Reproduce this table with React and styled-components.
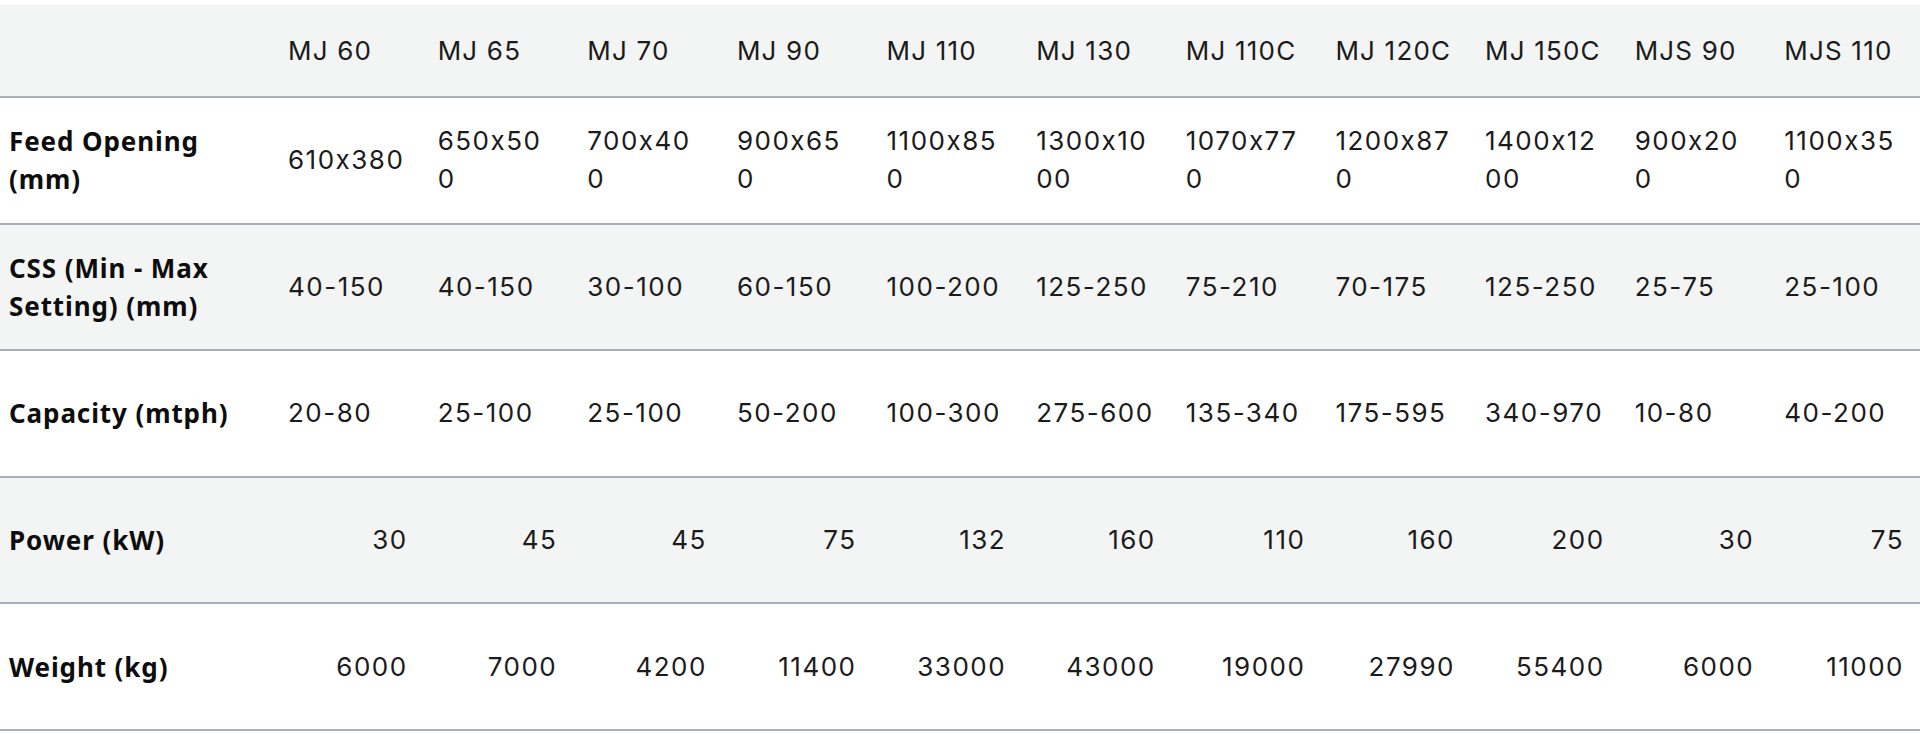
import React from "react";
import styled, { createGlobalStyle } from "styled-components";

const GlobalStyle = createGlobalStyle`
  html, body {
    margin: 0;
    padding: 0;
    background: #ffffff;
  }
  body {
    font-family: "Inter", "Liberation Sans", sans-serif;
    color: #1b1b1b;
  }
`;

const Wrapper = styled.div`
  padding-top: 5px;
  width: 1920px;
`;

const Table = styled.table`
  width: 100%;
  table-layout: fixed;
  border-collapse: separate;
  border-spacing: 0;
`;

const LabelCol = styled.col`
  width: 274px;
`;

const Row = styled.tr`
  background: ${(p) => (p.$shaded ? "#f3f4f4" : "#ffffff")};
`;

const HeadCell = styled.th`
  box-sizing: border-box;
  height: 93px;
  padding: 0 16px 0 14px;
  text-align: left;
  vertical-align: middle;
  font-family: "Inter", "Liberation Sans", sans-serif;
  font-weight: 400;
  font-size: 26px;
  letter-spacing: 1.2px;
  line-height: 38px;
  color: #1b1b1b;
  white-space: nowrap;
  border-bottom: 2px solid #a9aeb9;
`;

const LabelCell = styled.th`
  box-sizing: border-box;
  height: 126.6px;
  padding: 0 30px 0 9px;
  text-align: left;
  vertical-align: middle;
  font-family: "Noto Sans", "Open Sans", sans-serif;
  font-weight: 700;
  font-size: 26px;
  letter-spacing: 0.9px;
  line-height: 38px;
  color: #0d0d0d;
  border-bottom: 2px solid #a9aeb9;
`;

const DataCell = styled.td`
  box-sizing: border-box;
  height: 126.6px;
  padding: 0 ${(p) => (p.$numeric ? "16px" : "18px")} 0 14px;
  text-align: ${(p) => (p.$numeric ? "right" : "left")};
  vertical-align: middle;
  font-family: "Inter", "Liberation Sans", sans-serif;
  font-weight: 400;
  font-size: 26px;
  letter-spacing: 1.5px;
  line-height: 38px;
  color: #1b1b1b;
  white-space: ${(p) => (p.$breakable ? "normal" : "nowrap")};
  overflow-wrap: ${(p) => (p.$breakable ? "anywhere" : "normal")};
  border-bottom: 2px solid #a9aeb9;
`;

const models = [
  "MJ 60",
  "MJ 65",
  "MJ 70",
  "MJ 90",
  "MJ 110",
  "MJ 130",
  "MJ 110C",
  "MJ 120C",
  "MJ 150C",
  "MJS 90",
  "MJS 110",
];

const rows = [
  {
    label: "Feed Opening (mm)",
    breakable: true,
    values: [
      "610x380",
      "650x500",
      "700x400",
      "900x650",
      "1100x850",
      "1300x1000",
      "1070x770",
      "1200x870",
      "1400x1200",
      "900x200",
      "1100x350",
    ],
  },
  {
    label: "CSS (Min - Max Setting) (mm)",
    values: [
      "40-150",
      "40-150",
      "30-100",
      "60-150",
      "100-200",
      "125-250",
      "75-210",
      "70-175",
      "125-250",
      "25-75",
      "25-100",
    ],
  },
  {
    label: "Capacity (mtph)",
    values: [
      "20-80",
      "25-100",
      "25-100",
      "50-200",
      "100-300",
      "275-600",
      "135-340",
      "175-595",
      "340-970",
      "10-80",
      "40-200",
    ],
  },
  {
    label: "Power (kW)",
    numeric: true,
    values: ["30", "45", "45", "75", "132", "160", "110", "160", "200", "30", "75"],
  },
  {
    label: "Weight (kg)",
    numeric: true,
    values: [
      "6000",
      "7000",
      "4200",
      "11400",
      "33000",
      "43000",
      "19000",
      "27990",
      "55400",
      "6000",
      "11000",
    ],
  },
];

export default function App() {
  return (
    <Wrapper>
      <GlobalStyle />
      <Table>
        <colgroup>
          <LabelCol />
          {models.map((m) => (
            <col key={m} />
          ))}
        </colgroup>
        <thead>
          <Row $shaded>
            <HeadCell />
            {models.map((m) => (
              <HeadCell key={m}>{m}</HeadCell>
            ))}
          </Row>
        </thead>
        <tbody>
          {rows.map((r, i) => (
            <Row key={r.label} $shaded={i % 2 === 1}>
              <LabelCell>{r.label}</LabelCell>
              {r.values.map((v, j) => (
                <DataCell key={j} $numeric={r.numeric} $breakable={r.breakable}>
                  {v}
                </DataCell>
              ))}
            </Row>
          ))}
        </tbody>
      </Table>
    </Wrapper>
  );
}
